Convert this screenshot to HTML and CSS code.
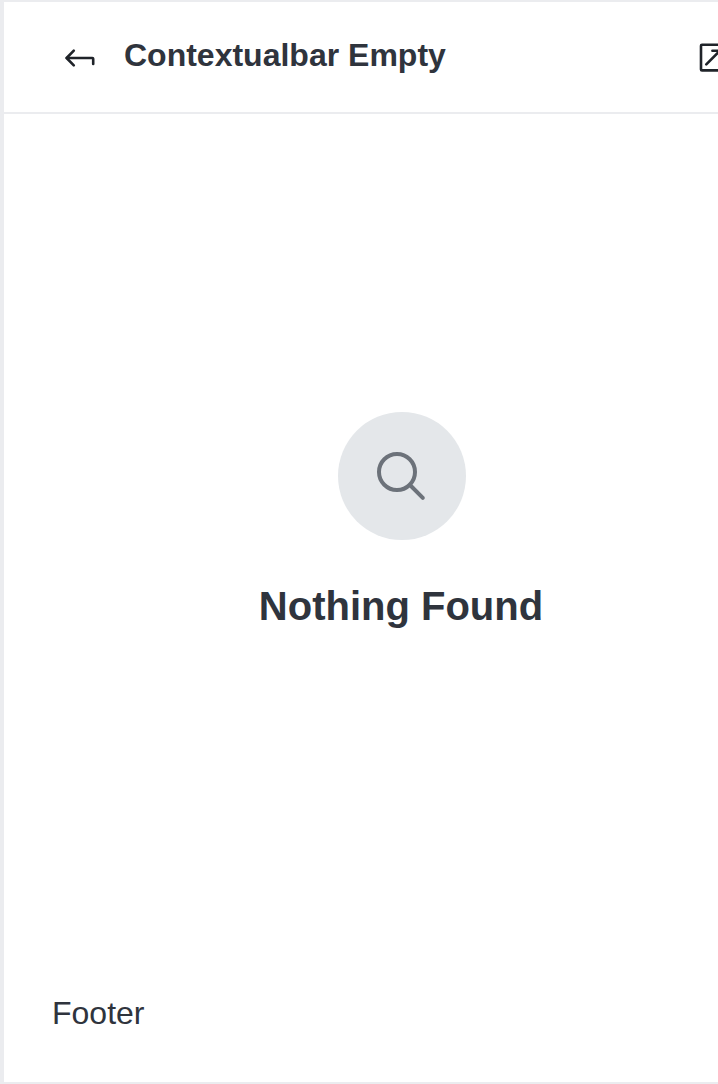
FILE: index.html
```html
<!DOCTYPE html>
<html lang="en">
<head>
<meta charset="utf-8">
<title>Contextualbar Empty</title>
<link rel="stylesheet" href="styles.css">
</head>
<body>
<aside class="contextualbar">
  <header class="header">
    <svg class="icon" viewBox="0 0 40 40" fill="none" stroke="currentColor" stroke-width="2.6" stroke-linecap="round" stroke-linejoin="round"><path d="M13.8 12.6 6.6 20l7.2 7.4"/><path d="M6.8 20H32.4q.8 0 .8.8V26"/></svg>
    <h1 class="title">Contextualbar Empty</h1>
    <svg class="icon" viewBox="0 0 40 40" fill="none" stroke="currentColor" stroke-width="2.6" stroke-linecap="round" stroke-linejoin="round"><rect x="7" y="6.8" width="25.6" height="25.6" rx="1"/><path d="M12.3 26.4 26 12.7"/><path d="M18.4 12.7h8V21"/></svg>
  </header>
  <main class="content">
    <div class="badge">
      <svg class="search" viewBox="0 0 64 64" fill="none" stroke="currentColor" stroke-width="4" stroke-linecap="round"><circle cx="27" cy="28" r="18"/><path d="M40 41 52.8 53.8"/></svg>
    </div>
    <h2 class="message">Nothing Found</h2>
  </main>
  <footer class="footer">Footer</footer>
</aside>
</body>
</html>
```
FILE: styles.css
```css
* {
  box-sizing: border-box;
}

body {
  margin: 0;
  overflow: hidden;
  background: #fff;
  color: #2f343d;
  font-family: "Liberation Sans", Arial, sans-serif;
}

.contextualbar {
  display: flex;
  flex-direction: column;
  width: 800px;
  height: 1084px;
  border: 2px solid #ebecef;
  border-left-width: 4px;
  border-right: 0;
}

.header {
  display: flex;
  align-items: center;
  height: 112px;
  padding: 0 48px 0 56px;
  border-bottom: 2px solid #ebecef;
}

.icon {
  flex: none;
  width: 40px;
  height: 40px;
  margin-top: 2px;
  color: #1f2329;
}

.title {
  flex: none;
  width: 546px;
  margin: 0 24px 4px;
  font-size: 32px;
  line-height: 48px;
}

.content {
  display: flex;
  flex: 1;
  flex-direction: column;
  align-items: center;
  padding-top: 298px;
}

.badge {
  display: grid;
  place-items: center;
  width: 128px;
  height: 128px;
  border-radius: 50%;
  background: #e4e7ea;
  color: #6c727a;
}

.search {
  width: 64px;
  height: 64px;
}

.message {
  margin: 36px 2px 0 0;
  font-size: 40px;
  line-height: 60px;
}

.footer {
  padding: 0 48px 49px;
  font-size: 32px;
  line-height: 40px;
}
```
